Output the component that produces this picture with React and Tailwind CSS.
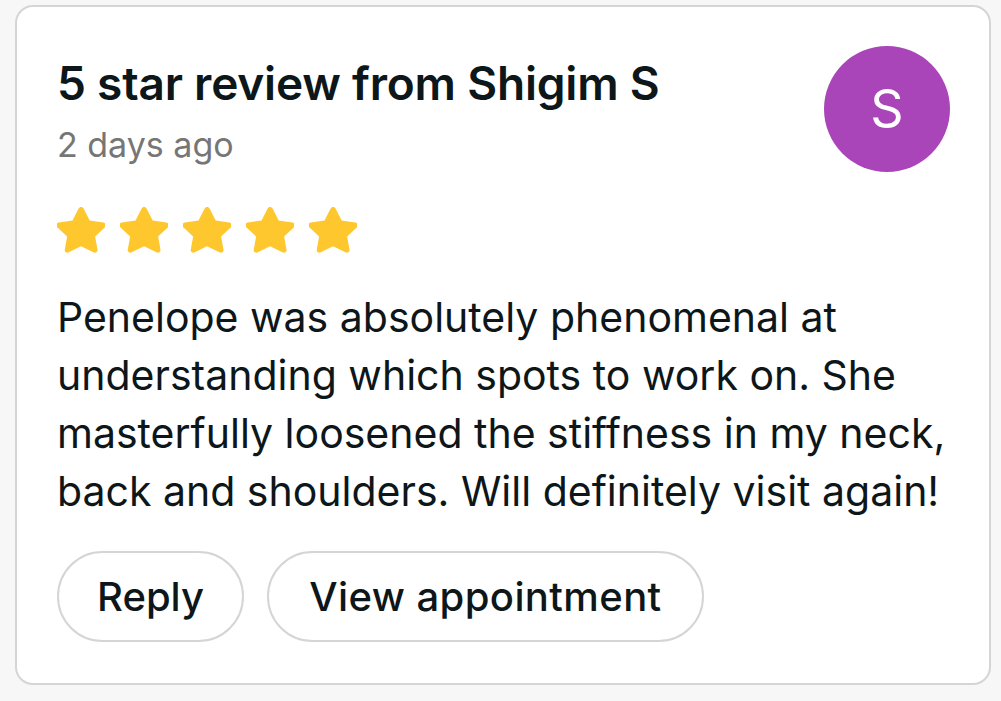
import React from "react";

function Star() {
  return (
    <svg width="48" height="46" viewBox="1.8 1.2 20.4 20.3" preserveAspectRatio="none" className="block">
      <path
        d="M12 1.2c.5 0 .9.3 1.1.7l2.6 5.3 5.8.8c1 .1 1.4 1.4.7 2.1l-4.2 4.1 1 5.8c.2 1-.9 1.7-1.7 1.2L12 18.5l-5.2 2.7c-.9.5-1.9-.3-1.7-1.2l1-5.8-4.2-4.1c-.7-.7-.3-2 .7-2.1l5.8-.8 2.6-5.3c.2-.4.6-.7 1-.7z"
        fill="#FFC72E"
      />
    </svg>
  );
}

export default function App() {
  return (
    <div
      className="w-[1001px] h-[701px] bg-[#f7f7f8] pt-[5px] pl-[15px]"
      style={{ fontFamily: "Inter, 'Noto Sans', sans-serif" }}
    >
      <div className="w-[976px] h-[680px] bg-white border-2 border-[#d5d5d5] rounded-[18px] pl-[40px] pr-[39px] pt-[39px] flex flex-col">
        <div className="flex justify-between items-start">
          <div className="mt-[9px]">
            <div className="text-[46px] leading-[56px] font-semibold text-[#0d1619] tracking-[-0.2px]">
              5 star review from Shigim S
            </div>
            <div className="text-[34px] leading-[44px] text-[#767676] mt-[12px]">2 days ago</div>
          </div>
          <div className="w-[126px] h-[126px] rounded-full bg-[#a945b8] flex items-center justify-center text-white text-[52px]">
            S
          </div>
        </div>
        <div className="flex gap-[15px] mt-[35px]">
          <Star />
          <Star />
          <Star />
          <Star />
          <Star />
        </div>
        <div className="text-[41px] leading-[58px] text-[#0d1619] mt-[35px] w-[900px]">
          Penelope was absolutely phenomenal at understanding which spots to work on. She masterfully loosened the stiffness in my neck, back and shoulders. Will definitely visit again!
        </div>
        <div className="flex gap-[23px] mt-[31px]">
          <button className="w-[187px] h-[91px] flex items-center justify-center rounded-full border-2 border-[#d5d5d5] text-[40px] text-[#0d1619] font-medium">
            Reply
          </button>
          <button className="w-[437px] h-[91px] flex items-center justify-center rounded-full border-2 border-[#d5d5d5] text-[40px] text-[#0d1619] font-medium tracking-[0.4px]">
            View appointment
          </button>
        </div>
      </div>
    </div>
  );
}
